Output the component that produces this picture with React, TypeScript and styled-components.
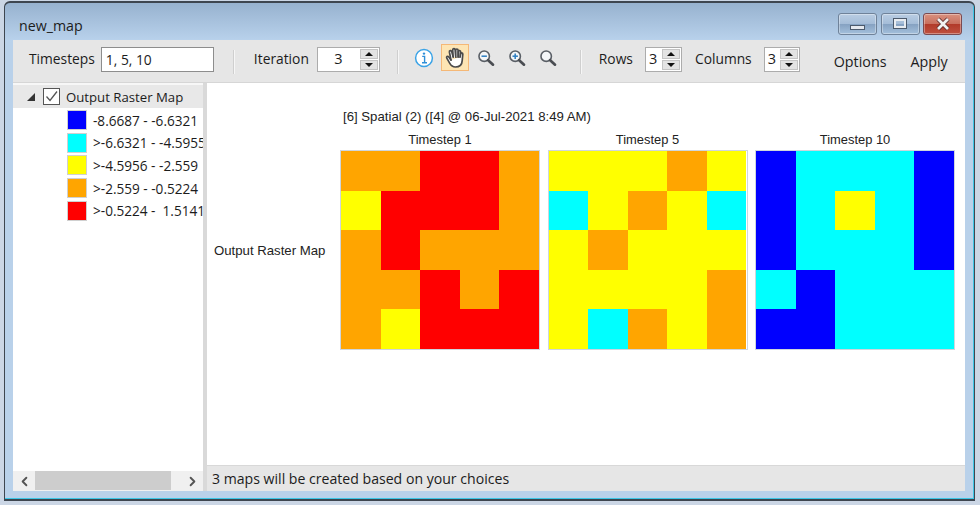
import React from 'react';
import styled, { createGlobalStyle } from 'styled-components';
import { ChevronLeft, ChevronRight } from 'lucide-react';

const GlobalStyle = createGlobalStyle`
  html, body {
    margin: 0;
    padding: 0;
    background: #cbd6e5;
    overflow: hidden;
  }
  * { box-sizing: border-box; }
`;

const Screen = styled.div`
  width: 980px;
  height: 505px;
  padding: 1px 5px 4px 4px;
  font-family: "Open Sans", "Noto Sans", sans-serif;
  color: #1c1c1c;
`;

const Frame = styled.div`
  height: 100%;
  display: flex;
  flex-direction: column;
  border: 1px solid #3e4650;
  border-top-width: 2px;
  border-bottom-width: 2px;
  border-radius: 6px 6px 0 0;
  background: linear-gradient(#97b2cf 0, #b9d2ec 38px, #b9d1ea 39px);
  box-shadow: inset -1px -1px 0 #3cc6e6;
  padding: 0 9px 8px 8px;
`;

const TitleBar = styled.div`
  height: 37px;
  flex: none;
  display: flex;
  align-items: flex-start;
  justify-content: space-between;
  padding-top: 10px;
`;

const Title = styled.div`
  font-size: 14.2px;
  line-height: 20px;
  margin: 3px 0 0 6px;
`;

const Controls = styled.div`
  display: flex;
  gap: 3.5px;
  margin-right: 3px;
`;

const WinButton = styled.div<{ $close?: boolean }>`
  width: 39px;
  height: 22px;
  display: flex;
  align-items: center;
  justify-content: center;
  border: 1px solid ${p => (p.$close ? '#7b4a50' : '#6f8299')};
  border-radius: 3px;
  background: ${p =>
    p.$close
      ? 'linear-gradient(#d9917f 0, #c9705f 48%, #b23a2a 52%, #bf5140 100%)'
      : 'linear-gradient(#b9cde3 0, #a5bdd8 48%, #86a2c2 52%, #a4c0dc 100%)'};
  box-shadow: inset 0 0 0 1px rgba(255, 255, 255, 0.35);
`;

const MinGlyph = styled.div`
  width: 15px;
  height: 5px;
  margin-top: 7px;
  background: #e4e8ee;
  border: 1px solid #4c5a6c;
`;

const MaxGlyph = styled.div`
  width: 14px;
  height: 11px;
  margin-top: -1px;
  background: transparent;
  border: 3px solid #e8ecf1;
  outline: 1px solid #4c5a6c;
  outline-offset: -1px;
`;

const CloseGlyph = styled.svg`
  width: 18px;
  height: 14px;
`;

const Body = styled.div`
  flex: 1;
  min-height: 0;
  display: flex;
  flex-direction: column;
  background: #fff;
`;

const Toolbar = styled.div`
  height: 43px;
  flex: none;
  display: flex;
  align-items: flex-start;
  background: #e6e6e6;
  border-bottom: 1px solid #d6d6d6;
  padding: 7px 0 0 16px;
  font-size: 13.8px;
`;

const Label = styled.span<{ $left?: number }>`
  line-height: 24px;
  margin-left: ${p => p.$left ?? 0}px;
  white-space: nowrap;
`;

const TextInput = styled.div`
  width: 113px;
  height: 25px;
  margin-left: 6px;
  padding-left: 4px;
  line-height: 23px;
  background: #fff;
  border: 1px solid #8d8d8d;
`;

const Separator = styled.div<{ $left: number }>`
  width: 2px;
  height: 24px;
  margin: 3px 0 0 ${p => p.$left}px;
  background: #cfcfcf;
  border-right: 1px solid #f6f6f6;
`;

const Spinner = styled.div<{ $width: number; $left: number }>`
  width: ${p => p.$width}px;
  height: 25px;
  margin-left: ${p => p.$left}px;
  display: flex;
  background: #fff;
  border: 1px solid #acacac;
  flex: none;
`;

const SpinValue = styled.div<{ $center?: boolean }>`
  flex: 1;
  line-height: 22px;
  font-size: 14.5px;
  text-align: ${p => (p.$center ? 'center' : 'left')};
  padding-left: ${p => (p.$center ? 0 : 3)}px;
`;

const SpinButtons = styled.div`
  width: 18px;
  margin: 1px;
  display: flex;
  flex-direction: column;
  gap: 1px;
`;

const SpinStep = styled.div<{ $down?: boolean }>`
  flex: 1;
  background: #e3e3e3;
  border: 1px solid #c4c4c4;
  display: flex;
  align-items: center;
  justify-content: center;
  &::after {
    content: '';
    border-left: 4px solid transparent;
    border-right: 4px solid transparent;
    ${p =>
      p.$down
        ? 'border-top: 4px solid #111;'
        : 'border-bottom: 4px solid #111;'}
  }
`;

const ToolIcon = styled.div<{ $left: number; $active?: boolean }>`
  width: ${p => (p.$active ? 28 : 22)}px;
  height: 27px;
  margin: -3px 0 0 ${p => p.$left}px;
  display: flex;
  align-items: center;
  justify-content: center;
  flex: none;
  background: ${p => (p.$active ? '#fde5b4' : 'transparent')};
  border: ${p => (p.$active ? '1px solid #f5b877' : 'none')};
`;

const Action = styled.span<{ $left: number }>`
  line-height: 24px;
  font-size: 14.3px;
  margin: 3px 0 0 ${p => p.$left}px;
`;

const Main = styled.div`
  flex: 1;
  min-height: 0;
  display: flex;
`;

const Side = styled.div`
  width: 190px;
  flex: none;
  display: flex;
  flex-direction: column;
  overflow: hidden;
`;

const TreeHeader = styled.div`
  height: 25px;
  flex: none;
  display: flex;
  align-items: center;
  background: #e8e8e8;
  border-top: 2px solid #f7f7f7;
  padding-left: 14px;
  font-size: 13.2px;
  white-space: nowrap;
`;

const Expander = styled.div`
  width: 0;
  height: 0;
  border-left: 8px solid transparent;
  border-bottom: 8px solid #333;
`;

const CheckBox = styled.div`
  width: 17px;
  height: 17px;
  margin: 0 6px 0 8px;
  background: #fff;
  border: 1px solid #555;
  display: flex;
  align-items: center;
  justify-content: center;
`;

const Legend = styled.div`
  flex: 1;
  min-height: 0;
  padding: 1px 0 0 54px;
  background: #fff;
`;

const LegendRow = styled.div`
  height: 22.6px;
  display: flex;
  align-items: center;
  font-size: 13.6px;
  white-space: pre;
`;

const Swatch = styled.div<{ $color: string }>`
  width: 20px;
  height: 20px;
  margin-right: 6px;
  flex: none;
  background: ${p => p.$color};
  border: 1px solid #d0d0d0;
`;

const HScroll = styled.div`
  height: 20px;
  flex: none;
  display: flex;
  align-items: center;
  background: #f0f0f0;
  color: #555;
`;

const ScrollArrow = styled.div`
  width: 22px;
  height: 100%;
  flex: none;
  display: flex;
  align-items: center;
  justify-content: center;
`;

const ScrollThumb = styled.div`
  width: 136px;
  height: 19px;
  align-self: flex-start;
  background: #cdcdcd;
`;

const ScrollTrack = styled.div`
  flex: 1;
`;

const Splitter = styled.div`
  width: 4px;
  flex: none;
  background: #d9d9d9;
`;

const Content = styled.div`
  flex: 1;
  min-width: 0;
  display: flex;
  flex-direction: column;
`;

const Plot = styled.div`
  flex: 1;
  min-height: 0;
  padding: 25px 0 0 7px;
  font-family: "Liberation Sans", Arial, sans-serif;
  font-size: 13.2px;
`;

const PlotTitle = styled.div`
  height: 18px;
  line-height: 18px;
  margin-left: 129px;
  color: #222;
`;

const PlotRow = styled.div`
  display: flex;
  align-items: flex-end;
`;

const RowLabel = styled.div`
  width: 126px;
  height: 200px;
  flex: none;
  display: flex;
  align-items: center;
  color: #222;
`;

const Maps = styled.div`
  display: flex;
  gap: 7.5px;
`;

const MapColumn = styled.div`
  width: 200px;
`;

const MapTitle = styled.div`
  height: 24px;
  padding-top: 2px;
  line-height: 24px;
  font-size: 12.9px;
  text-align: center;
  color: #222;
`;

const MapGrid = styled.div`
  width: 200px;
  height: 200px;
  display: grid;
  grid-template-columns: repeat(5, 1fr);
  grid-template-rows: repeat(5, 1fr);
  border: 1px solid #cfd6dd;
`;

const Cell = styled.div<{ $color: string }>`
  background: ${p => p.$color};
`;

const StatusBar = styled.div`
  height: 26px;
  flex: none;
  padding-left: 5px;
  line-height: 25px;
  font-size: 14.1px;
  background: #e6e6e6;
  border-top: 1px solid #d8d8d8;
`;

const colors: Record<string, string> = {
  B: '#0000ff',
  C: '#00ffff',
  Y: '#ffff00',
  O: '#ffa500',
  R: '#ff0000',
};

const legend = [
  ['B', '-8.6687 - -6.6321'],
  ['C', '>-6.6321 - -4.5955'],
  ['Y', '>-4.5956 - -2.559'],
  ['O', '>-2.559 - -0.5224'],
  ['R', '>-0.5224 -  1.5141'],
];

const maps = [
  { title: 'Timestep 1', cells: 'OORRO' + 'YRRRO' + 'OROOO' + 'OOROR' + 'OYRRR' },
  { title: 'Timestep 5', cells: 'YYYOY' + 'CYOYC' + 'YOYYY' + 'YYYYO' + 'YCOYO' },
  { title: 'Timestep 10', cells: 'BCCCB' + 'BCYCB' + 'BCCCB' + 'CBCCC' + 'BBCCC' },
];

const Magnifier: React.FC<{ mark?: 'plus' | 'minus' }> = ({ mark }) => (
  <svg width="18" height="18" viewBox="0 0 20 20" fill="none">
    <circle cx="8" cy="8" r="5.8" fill="#f4f6f8" stroke="#5a5f66" strokeWidth="1.8" />
    <path d="M12.4 12.4l5.4 5" stroke="#4a4d52" strokeWidth="3" strokeLinecap="round" />
    {mark && <path d="M5 8h6" stroke="#2f7fc1" strokeWidth="1.7" />}
    {mark === 'plus' && <path d="M8 5v6" stroke="#2f7fc1" strokeWidth="1.7" />}
  </svg>
);

const InfoIcon = () => (
  <svg width="20" height="20" viewBox="0 0 20 20" fill="none">
    <circle cx="10" cy="10" r="8.4" fill="#fff" stroke="#3ba3e6" strokeWidth="1.5" />
    <circle cx="10" cy="5.6" r="1.2" fill="#2f8fd8" />
    <path d="M8.2 8.4H10.6V14.4M8 14.8h5" stroke="#2f8fd8" strokeWidth="1.4" />
  </svg>
);

const HandIcon = () => (
  <svg width="20" height="21" viewBox="0 0 20 21" fill="#fff" stroke="#4a4a4a" strokeWidth="1.7" strokeLinecap="round" strokeLinejoin="round">
    <path d="M6 13L3.6 9.8c-.9-1.1-2.6 0-1.8 1.4l3 5.2C6 18.6 7.6 20 10.4 20c4 0 6.6-2.6 6.8-6.4l.6-6.4c.1-1.6-2-1.8-2.3-.2L15 10" />
    <path d="M6 13L4.4 5.2C4.1 3.5 6.3 3 6.7 4.6L8.2 10" />
    <path d="M8.2 10L7.7 3C7.6 1.2 10 1 10.2 2.8L10.8 10" />
    <path d="M10.8 10L10.7 3.2C10.7 1.6 13 1.6 13.1 3.3L13.2 10" />
    <path d="M13.2 10L13.4 4.6C13.5 3 15.7 3.2 15.6 4.8L15 10" />
  </svg>
);

const App: React.FC = () => (
  <Screen>
    <GlobalStyle />
    <Frame>
      <TitleBar>
        <Title>new_map</Title>
        <Controls>
          <WinButton><MinGlyph /></WinButton>
          <WinButton><MaxGlyph /></WinButton>
          <WinButton $close>
            <CloseGlyph viewBox="0 0 18 14">
              <path d="M4 2l10 10M14 2L4 12" stroke="#5a2a2a" strokeWidth="4.4" />
              <path d="M4 2l10 10M14 2L4 12" stroke="#f2f2f2" strokeWidth="2.8" />
            </CloseGlyph>
          </WinButton>
        </Controls>
      </TitleBar>
      <Body>
        <Toolbar>
          <Label>Timesteps</Label>
          <TextInput>1, 5, 10</TextInput>
          <Separator $left={19} />
          <Label $left={19}>Iteration</Label>
          <Spinner $width={63} $left={8}>
            <SpinValue $center>3</SpinValue>
            <SpinButtons><SpinStep /><SpinStep $down /></SpinButtons>
          </Spinner>
          <Separator $left={17} />
          <ToolIcon $left={14}><InfoIcon /></ToolIcon>
          <ToolIcon $left={6} $active><HandIcon /></ToolIcon>
          <ToolIcon $left={6}><Magnifier mark="minus" /></ToolIcon>
          <ToolIcon $left={9}><Magnifier mark="plus" /></ToolIcon>
          <ToolIcon $left={9}><Magnifier /></ToolIcon>
          <Separator $left={21} />
          <Label $left={17}>Rows</Label>
          <Spinner $width={37} $left={12}>
            <SpinValue>3</SpinValue>
            <SpinButtons><SpinStep /><SpinStep $down /></SpinButtons>
          </Spinner>
          <Label $left={13}>Columns</Label>
          <Spinner $width={36} $left={12}>
            <SpinValue>3</SpinValue>
            <SpinButtons><SpinStep /><SpinStep $down /></SpinButtons>
          </Spinner>
          <Action $left={34}>Options</Action>
          <Action $left={24}>Apply</Action>
        </Toolbar>
        <Main>
          <Side>
            <TreeHeader>
              <Expander />
              <CheckBox>
                <svg width="13" height="13" viewBox="0 0 13 13" fill="none">
                  <path d="M1.5 6.5l3.5 4 7-9" stroke="#555" strokeWidth="1.3" />
                </svg>
              </CheckBox>
              Output Raster Map
            </TreeHeader>
            <Legend>
              {legend.map(([key, text]) => (
                <LegendRow key={key}>
                  <Swatch $color={colors[key]} />
                  {text}
                </LegendRow>
              ))}
            </Legend>
            <HScroll>
              <ScrollArrow><ChevronLeft size={15} strokeWidth={3} /></ScrollArrow>
              <ScrollThumb />
              <ScrollTrack />
              <ScrollArrow><ChevronRight size={15} strokeWidth={3} /></ScrollArrow>
            </HScroll>
          </Side>
          <Splitter />
          <Content>
            <Plot>
              <PlotTitle>[6] Spatial (2) ([4] @ 06-Jul-2021 8:49 AM)</PlotTitle>
              <PlotRow>
                <RowLabel>Output Raster Map</RowLabel>
                <Maps>
                  {maps.map(map => (
                    <MapColumn key={map.title}>
                      <MapTitle>{map.title}</MapTitle>
                      <MapGrid>
                        {map.cells.split('').map((c, i) => (
                          <Cell key={i} $color={colors[c]} />
                        ))}
                      </MapGrid>
                    </MapColumn>
                  ))}
                </Maps>
              </PlotRow>
            </Plot>
            <StatusBar>3 maps will be created based on your choices</StatusBar>
          </Content>
        </Main>
      </Body>
    </Frame>
  </Screen>
);

export default App;
